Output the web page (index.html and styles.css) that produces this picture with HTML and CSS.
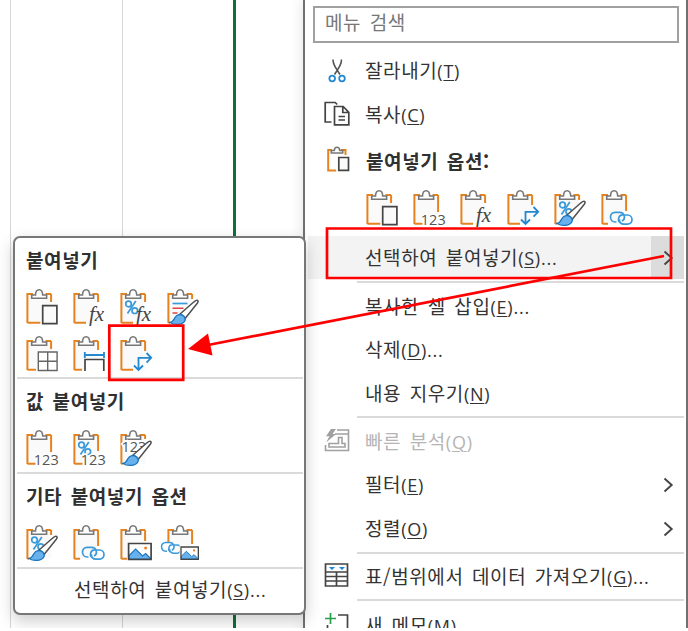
FILE: index.html
```html
<!DOCTYPE html>
<html lang="ko">
<head>
<meta charset="utf-8">
<title>메뉴</title>
<link rel="stylesheet" href="styles.css">
</head>
<body>
<svg class="defs" width="0" height="0">
  <defs>
    <g id="board">
      <path d="M1.2 6h24v29h-24z" fill="#fafafa"/>
      <path d="M7 6H1.4v29M19.500 6h5.600" class="or"/>
      <path d="M5.700 10.300V7h3.800c.2-7 7-7 7.200 0h3.900v3.300z" class="clip"/>
    </g>
    <g id="b-page"><use href="#board"/><path d="M25.100 6v8M1.400 34.700H14.300" class="or"/><path d="M16.700 17.700h14.200v18H16.700z" fill="#fafafa" class="dk"/></g>
    <g id="b-num"><use href="#board"/><path d="M25.100 6v17M1.400 34.700H9.500" class="or"/><text x="7.800" y="36" class="num">123</text></g>
    <g id="b-fx"><use href="#board"/><path d="M25.100 6v8M1.400 34.700H13" class="or"/><text x="16" y="33" class="fx">fx</text></g>
    <g id="b-move"><use href="#board"/><path d="M25.100 6v10M1.400 34.700H13" class="or"/><path d="M18.500 34V22.800H30M14 30.500l4.500 4.500 4.500-4.500M26.500 18l4.700 4.800-4.700 4.800" class="bl"/></g>
    <g id="brush"><path d="M12.500 26.500L27 13.800c3-2.500 5.500-1.500 3.300 1.400L18.500 30z" fill="#fff" class="brd"/><path d="M3 34.500c3.500-.8 4-3 5-5 1.800-3.500 6.500-4 9-1.200 2.500 3 1 6.500-3 7.500-3.500 1-8 .6-11-1.300z" fill="#69b1ec" stroke="#1b75bd" stroke-width="1.300"/></g>
    <g id="pct"><circle cx="8.500" cy="16" r="2.800" class="bt"/><circle cx="14.800" cy="22.700" r="2.800" class="bt"/><path d="M15.800 13L7.500 25.500" class="bt"/></g>
    <g id="b-pbrush"><use href="#board"/><path d="M25.100 6v5M1.400 34.700H3" class="or"/><use href="#pct"/><use href="#brush"/></g>
    <g id="chain"><path d="M15.500 33h-1.300c-6 0-6.500-9.700 0-9.700h4.500c5 0 6.300 6.700 2.300 8.700M20.800 34.500c-5.700-2.300-3.300-9.500 1.800-8.500M23.500 26h3c6 0 6 9.200 0 9.200H23c-3.500 0-5-2.500-4.400-5" class="bt"/></g>
    <g id="b-link"><use href="#board"/><path d="M25.100 6v16M1.400 34.700H7" class="or"/><use href="#chain"/></g>
    <g id="pic"><path d="M0 0h22.500v16H0z" fill="#fff"/><path d="M.5 15.500V12L7 5.500l7 7 3-2.500 5 5v.5z" fill="#69b1ec" stroke="#1b75bd" stroke-width="1.200"/><circle cx="17" cy="4.500" r="1.500" fill="#f08122"/><path d="M0 0h22.500v16H0z" fill="none" class="dk"/></g>
  </defs>
</svg>

<div class="screen">
  <div class="sheet"><i class="line l1"></i><i class="line l2"></i><i class="line l3"></i></div>

  <nav class="menu">
    <div class="search"><span class="t">메뉴 검색</span></div>
    <div class="row"><svg class="ic" viewBox="0 0 28 28"><path d="M10 2.500c0 4 1.500 6.500 7 15M18.500 2.500c0 4-1.500 6.500-7 15" fill="none" stroke="#555" stroke-width="1.600"/><circle cx="9.200" cy="21.500" r="2.800" class="bl"/><circle cx="19" cy="21.500" r="2.800" class="bl"/></svg><span class="t">잘라내기<b>(<u>T</u>)</b></span></div>
    <div class="row"><svg class="ic" viewBox="0 0 28 28"><path d="M8.500 21H2.200V1.500h10l2 2" fill="none" class="dk"/><path d="M11.500 5.500h8.700l5.600 5.800v12.500H11.500zM19.800 5.500v6h6M15.500 15.500h6.500M15.500 19h6.500" fill="none" class="dk"/></svg><span class="t">복사<b>(<u>C</u>)</b></span></div>
    <div class="row head"><svg class="ic" viewBox="0 0 28 28"><path d="M9 4H5.200v20.500h8M18 4h4.500v5" class="or"/><path d="M8.300 7V4.500h3C11.500.2 16.500.2 16.700 4.500h3V7z" class="clip"/><path d="M15.800 11.500h9.700v12.800h-9.700z" fill="#fafafa" class="dk"/></svg><span class="t bold">붙여넣기 옵션:</span></div>
    <div class="icons main">
      <svg><use href="#b-page"/></svg><svg><use href="#b-num"/></svg><svg><use href="#b-fx"/></svg><svg><use href="#b-move"/></svg><svg><use href="#b-pbrush"/></svg><svg><use href="#b-link"/></svg>
    </div>
    <div class="row active"><span class="t">선택하여 붙여넣기<b>(<u>S</u>)...</b></span><span class="more"><svg class="chev" viewBox="0 0 12 16"><path d="M1.500 1.500L8.700 8l-7.200 6.500"/></svg></span></div>
    <hr>
    <div class="row"><span class="t">복사한 셀 삽입<b>(<u>E</u>)...</b></span></div>
    <div class="row"><span class="t">삭제<b>(<u>D</u>)...</b></span></div>
    <div class="row"><span class="t">내용 지우기<b>(<u>N</u>)</b></span></div>
    <hr>
    <div class="row off"><svg class="ic" viewBox="0 0 28 28"><g fill="none" stroke="#a0a0a0" stroke-width="1.600"><path d="M14 3h11.500v20.500H2.500V18M12 7h13M6 19.500v-3h9.500v-6h3.500v6h3v3.500H6z"/></g><path d="M8 2h5L9.500 7H13L3 15.500l3.500-6.300H3z" fill="#a0a0a0"/></svg><span class="t">빠른 분석<b>(<u>Q</u>)</b></span></div>
    <div class="row"><span class="t">필터<b>(<u>E</u>)</b></span><span class="more"><svg class="chev" viewBox="0 0 12 16"><path d="M1.500 1.500L8.700 8l-7.200 6.500"/></svg></span></div>
    <div class="row"><span class="t">정렬<b>(<u>O</u>)</b></span><span class="more"><svg class="chev" viewBox="0 0 12 16"><path d="M1.500 1.500L8.700 8l-7.200 6.500"/></svg></span></div>
    <hr>
    <div class="row"><svg class="ic" viewBox="0 0 28 28"><path d="M2.500 2h22v22h-22zM2.500 10h22M2.500 14.500h22M2.500 19h22M13.500 10v14" fill="#fff" class="dk"/><path d="M6 5h6L9 8zM16 5h6l-3 3z" fill="#1886d9"/></svg><span class="t">표/범위에서 데이터 가져오기<b>(<u>G</u>)...</b></span></div>
    <hr>
    <div class="row last"><svg class="ic" viewBox="0 0 28 28"><path d="M7.500 2v11M2 7.500h11" stroke="#28a04b" stroke-width="1.700"/><path d="M15 4h9.500v18H4.500v-8" fill="none" class="dk"/></svg><span class="t">새 메모<b>(<u>M</u>)</b></span></div>
  </nav>

  <section class="popup">
    <h2 class="t bold">붙여넣기</h2>
    <div class="icons two">
      <svg><use href="#b-page"/></svg><svg><use href="#b-fx"/></svg>
      <svg><use href="#board"/><path d="M25.100 6v8M1.400 34.700H13" class="or"/><use href="#pct"/><text x="16" y="33" class="fx">fx</text></svg>
      <svg><use href="#board"/><path d="M25.100 6v5M1.400 34.700H3" class="or"/><path d="M5.500 15.500h15" class="bt"/><path d="M5.500 20.200h11M5.500 25h5" stroke="#e04343" stroke-width="1.600"/><use href="#brush"/></svg>
      <svg><use href="#board"/><path d="M25.100 6v8M1.400 34.700H10" class="or"/><path d="M12.300 17h18.800v18.500H12.300zM21.700 17v18.500M12.300 26.300h18.800" fill="#fff" stroke="#666" stroke-width="1.400"/></svg>
      <svg><use href="#board"/><path d="M25.100 6v9M1.400 34.700H9" class="or"/><path d="M11.500 24h20v12h-20z" fill="#fff"/><path d="M12 36V24.500h18.800V36" fill="none" class="dk"/><path d="M12 20h19M11.800 17v6M31 17v6" class="bl"/></svg>
      <svg><use href="#b-move"/></svg>
    </div>
    <hr>
    <h2 class="t bold">값 붙여넣기</h2>
    <div class="icons">
      <svg><use href="#b-num"/></svg>
      <svg><use href="#board"/><path d="M25.100 6v16M1.400 34.700H9.500" class="or"/><use href="#pct"/><text x="7.800" y="36" class="num">123</text></svg>
      <svg><use href="#board"/><path d="M25.100 6v4M1.400 34.700H3" class="or"/><text x="1.500" y="23" class="num">123</text><use href="#brush"/></svg>
    </div>
    <hr>
    <h2 class="t bold">기타 붙여넣기 옵션</h2>
    <div class="icons">
      <svg><use href="#b-pbrush"/></svg><svg><use href="#b-link"/></svg>
      <svg><use href="#board"/><path d="M25.100 6v11M1.400 34.700H7" class="or"/><use href="#pic" transform="translate(8.600 19.500)"/></svg>
      <svg><use href="#board"/><path d="M25.100 6v14" class="or"/><path d="M-5 18h12v18h-12z" fill="#fff"/><use href="#chain" transform="translate(-14 -2.500) scale(.9)"/><path d="M12.500 21h19v15h-19z" fill="#fff"/><use href="#pic" transform="translate(14 23) scale(.77)"/></svg>
    </div>
    <hr>
    <div class="special"><span class="t">선택하여 붙여넣기<b>(<u>S</u>)...</b></span></div>
  </section>

  <svg class="marks" viewBox="0 0 688 628">
    <path d="M327 228.500h344v49.500H327zM109.300 325.700h73.900v54.100h-73.900z"/>
    <path d="M664 256L208 345"/>
    <path class="tip" d="M188 349l20-15.500 4.500 22z"/>
  </svg>
</div>
</body>
</html>
```
FILE: styles.css
```css
* { box-sizing: border-box; }
body { margin: 0; background: #fff; color: #333; }
.defs { position: absolute; }
.screen { position: relative; width: 688px; height: 628px; overflow: hidden; font-family: "Noto Sans CJK KR", sans-serif; }
.sheet { position: absolute; inset: 0; }
.line { position: absolute; top: 0; bottom: 0; width: 1px; background: #d6d6d6; }
.l1 { left: 10px; }
.l2 { left: 122px; }
.l3 { left: 233px; width: 3px; background: #0f703b; }

.menu { position: absolute; left: 303px; top: -7px; width: 385px; height: 660px; padding: 11px 2px 0 3px; background: #fff; border: 2px solid #707070; border-radius: 8px; box-shadow: 0 4px 14px rgba(0,0,0,.12); }
.search { height: 37px; width: 366px; margin: 0 0 6px 5px; padding: 0 0 5px 10px; display: flex; align-items: center; border: 2px solid #a0a0a0; color: #777; }
.row { display: flex; align-items: center; height: 43.700px; padding-left: 57px; }
.row:has(.ic) { padding-left: 15px; }
.ic { width: 28px; height: 28px; margin-right: 14px; flex: none; }
.head { height: 49px; padding-top: 1px; }
.head .ic { margin-right: 15px; margin-top: -2px; }
.row.active { height: 43px; background: #f3f3f3; }
.more { margin-left: auto; width: 33px; height: 100%; display: flex; align-items: center; justify-content: center; padding-left: 3px; }
.active .more { background: #dcdcdc; }
.chev { width: 12px; height: 16px; fill: none; stroke: #444; stroke-width: 1.900; }
.off { color: #b5b5b5; }
.last { height: 46px; }
hr { height: 2px; margin: 1px 0 1px 49px; border: 0; background: #dadada; }
.active + hr { margin-top: 2px; }

.t { font-size: 19px; line-height: 24px; letter-spacing: .6px; word-spacing: 2.600px; white-space: nowrap; margin: 0; }
.t b { font: 400 18px/24px "Open Sans", sans-serif; letter-spacing: .75px; }
.t u { text-decoration-thickness: 1px; text-underline-offset: 2px; }
.bold { font-weight: 700; color: #303030; }

.icons { display: grid; grid-template-columns: repeat(6, 47px); grid-auto-rows: 47px; }
.icons svg { width: 32px; height: 37px; overflow: visible; }
.main { height: 51px; padding: 4px 0 0 58px; }

.popup { position: absolute; left: 13px; top: 236px; width: 293px; height: 379px; padding: 10px 1px 0 2px; background: #fff; border: 2px solid #777; border-radius: 7px; box-shadow: 0 6px 16px rgba(0,0,0,.2); }
.popup h2 { height: 40px; padding-left: 9px; }
.popup .icons { grid-template-columns: repeat(4, 47px); height: 43px; padding-left: 9px; }
.popup .two { height: 89px; }
.popup hr { margin: 0 0 10px; }
.special { padding-left: 57px; margin-top: -2px; }

.or { fill: none; stroke: #e58320; stroke-width: 2; }
.clip { fill: #fff; stroke: #777; stroke-width: 1.600; }
.dk { stroke: #444; stroke-width: 1.700; }
.bl { fill: none; stroke: #2388cf; stroke-width: 1.800; }
.bt { fill: none; stroke: #3a9ad9; stroke-width: 1.700; }
.brd { stroke: #505050; stroke-width: 1.500; }
.num { font: 14.500px "Open Sans", sans-serif; fill: #555; stroke: #fff; stroke-width: 3px; paint-order: stroke; }
.fx { font: italic 21px "Liberation Serif", serif; fill: #444; }

.marks { position: absolute; inset: 0; width: 688px; height: 628px; fill: none; stroke: #f00; stroke-width: 2.700; }
.tip { fill: #f00; stroke: none; }
```
